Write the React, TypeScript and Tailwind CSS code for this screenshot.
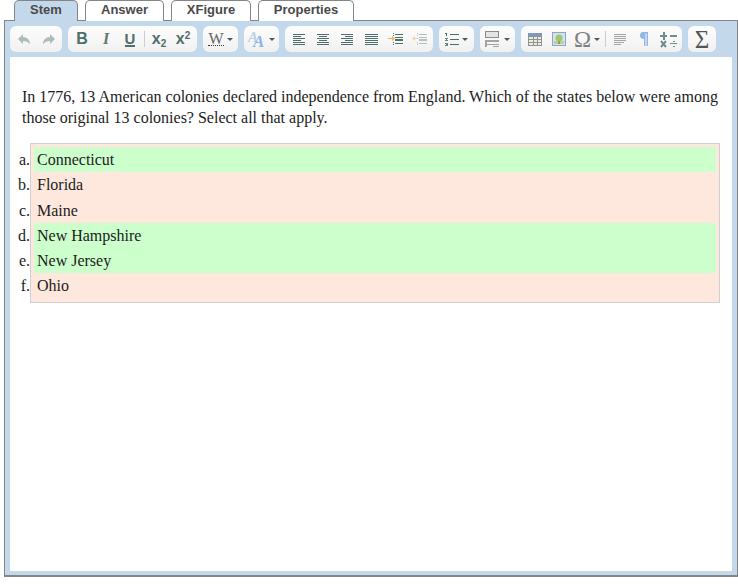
import React from "react";

const Caret = () => (
  <span className="w-0 h-0 border-x-[3px] border-x-transparent border-t-[3px] border-t-[#555]" />
);

const Btn = ({ w = "w-6", children }: { w?: string; children: React.ReactNode }) => (
  <div className={`${w} h-[26px] flex items-center justify-center gap-[3px] shrink-0`}>{children}</div>
);

const Group = ({ children }: { children: React.ReactNode }) => (
  <div className="flex items-center h-[26px] px-[2px] rounded-[6px] bg-gradient-to-b from-[#fdfdfd] to-[#f1f1f1] shrink-0">
    {children}
  </div>
);

const Sep = () => <div className="w-px h-[16px] bg-[#c9cfd0] mx-[2px] shrink-0" />;

const Svg = ({ children, w = 16, h = 16 }: { children: React.ReactNode; w?: number; h?: number }) => (
  <svg width={w} height={h} viewBox={`0 0 ${w} ${h}`} className="block shrink-0" shapeRendering="crispEdges">
    {children}
  </svg>
);

const Lines = ({ rows, color = "#4f6e6c" }: { rows: [number, number, number][]; color?: string }) => (
  <Svg w={13} h={12}>
    {rows.map(([x, y, w], i) => (
      <rect key={i} x={x} y={y} width={w} height={1} fill={color} />
    ))}
  </Svg>
);

const Tab = ({ label, active, w }: { label: string; active?: boolean; w: string }) => (
  <div
    className={`${w} h-[21px] -mb-px flex items-center justify-center rounded-t-[5px] border border-b-0 border-[#858585] text-[13px] font-bold text-[#4a4a4a] pb-[2px] ${
      active ? "bg-[#c4d8eb]" : "bg-white"
    }`}
    style={active ? { zIndex: 1 } : undefined}
  >
    {label}
  </div>
);

const items = [
  { t: "Connecticut", ok: true },
  { t: "Florida", ok: false },
  { t: "Maine", ok: false },
  { t: "New Hampshire", ok: true },
  { t: "New Jersey", ok: true },
  { t: "Ohio", ok: false },
];

const sans = "font-['Liberation_Sans',Arial,sans-serif]";
const serif = "font-['Liberation_Serif','Times_New_Roman',serif]";

export default function App() {
  return (
    <div className={`w-[738px] h-[584px] bg-white overflow-hidden ${sans}`}>
      <div className="flex gap-[7px] pl-[14px] h-5 relative">
        <Tab label="Stem" active w="w-[64px]" />
        <Tab label="Answer" w="w-[79px]" />
        <Tab label="XFigure" w="w-[80px]" />
        <Tab label="Properties" w="w-[96px]" />
      </div>
      <div className="ml-1 w-[734px] h-[557px] border border-[#858585] border-b-2 bg-[#c4d8eb] flex flex-col">
        <div className="flex items-center gap-[6px] pl-[5px] pt-[5px] h-[36px] shrink-0 pb-[5px]">
          <Group>
            <Btn>
              <Svg w={15} h={12}>
                <path d="M6 1 L1 6 L6 11 V8 C9 8 11 9 13 11 C13 7 10 4 6 4 Z" fill="#aebcb9" shapeRendering="auto" />
              </Svg>
            </Btn>
            <Btn>
              <Svg w={15} h={12}>
                <path d="M9 1 L14 6 L9 11 V8 C6 8 4 9 2 11 C2 7 5 4 9 4 Z" fill="#aebcb9" shapeRendering="auto" />
              </Svg>
            </Btn>
          </Group>
          <Group>
            <Btn><span className="text-[16px] leading-none font-black text-[#4f6e6c]">B</span></Btn>
            <Btn><span className={`${serif} text-[16px] leading-none font-bold italic text-[#5f7775]`}>I</span></Btn>
            <Btn>
              <span className="text-[15px] leading-[13px] font-bold text-[#4f6e6c] border-b-2 border-[#4f6e6c]">U</span>
            </Btn>
            <Sep />
            <Btn>
              <span className="text-[16px] leading-none font-bold text-[#4f6e6c]">
                x<span className="text-[10px] relative top-[3px]">2</span>
              </span>
            </Btn>
            <Btn>
              <span className="text-[16px] leading-none font-bold text-[#4f6e6c]">
                x<span className="text-[10px] relative -top-[5px]">2</span>
              </span>
            </Btn>
          </Group>
          <Group>
            <Btn w="w-[31px]">
              <span className={`${serif} text-[16px] leading-[13px] text-[#666] border-b border-dotted border-[#333]`}>W</span>
              <Caret />
            </Btn>
          </Group>
          <Group>
            <Btn w="w-[31px]">
              <span className={`${serif} relative w-[18px] h-[18px] block italic font-bold text-[#8fb4ea] shrink-0`}>
                <span className="absolute left-0 top-0 text-[15px] leading-none text-[#bcd0e8]">A</span>
                <span className="absolute left-[5px] top-[3px] text-[17px] leading-none">A</span>
              </span>
              <Caret />
            </Btn>
          </Group>
          <Group>
            <Btn><Lines rows={[[0,1,12],[0,3,8],[0,5,12],[0,7,8],[0,9,12],[0,11,12]]} /></Btn>
            <Btn><Lines rows={[[0,1,12],[2,3,8],[0,5,12],[2,7,8],[0,9,12],[0,11,12]]} /></Btn>
            <Btn><Lines rows={[[0,1,12],[4,3,8],[0,5,12],[4,7,8],[0,9,12],[0,11,12]]} /></Btn>
            <Btn><Lines rows={[[0,1,13],[0,3,13],[0,5,13],[0,7,13],[0,9,13],[0,11,13]]} /></Btn>
            <Btn>
              <Svg w={15} h={12}>
                <rect x={5} y={0} width={1} height={1} fill="#4f6e6c" />
                <rect x={5} y={2} width={1} height={1} fill="#4f6e6c" />
                <rect x={5} y={9} width={1} height={1} fill="#4f6e6c" />
                <rect x={5} y={11} width={1} height={1} fill="#4f6e6c" />
                <rect x={7} y={1} width={8} height={1} fill="#4f6e6c" />
                <rect x={7} y={4} width={8} height={1} fill="#4f6e6c" />
                <rect x={7} y={6} width={8} height={2} fill="#4f6e6c" />
                <rect x={7} y={10} width={8} height={1} fill="#4f6e6c" />
                <path d="M0 5 H4 V3 L7 5.5 L4 8 V6 H0 Z" fill="#f2b05c" shapeRendering="auto" />
              </Svg>
            </Btn>
            <Btn>
              <Svg w={15} h={12}>
                <rect x={5} y={0} width={1} height={1} fill="#b4c2bf" />
                <rect x={5} y={2} width={1} height={1} fill="#b4c2bf" />
                <rect x={5} y={9} width={1} height={1} fill="#b4c2bf" />
                <rect x={5} y={11} width={1} height={1} fill="#b4c2bf" />
                <rect x={7} y={1} width={8} height={1} fill="#b4c2bf" />
                <rect x={7} y={4} width={8} height={1} fill="#b4c2bf" />
                <rect x={7} y={6} width={8} height={2} fill="#b4c2bf" />
                <rect x={7} y={10} width={8} height={1} fill="#b4c2bf" />
                <path d="M7 5 H3 V3 L0 5.5 L3 8 V6 H7 Z" fill="#f6d3a4" shapeRendering="auto" />
              </Svg>
            </Btn>
          </Group>
          <Group>
            <Btn w="w-[31px]">
              <Svg w={14} h={14}>
                <path d="M0 1 H2 V4 H1 V2 H0 Z" fill="#4f6e6c" />
                <path d="M0 6 H3 V7 H1 V8 H3 V9 H0 V8 H2 V7 H0 Z" fill="#4f6e6c" opacity={0.85} />
                <path d="M0 11 H3 V14 H0 V13 H2 V12.5 H1 V12 H2 V12 H0 Z" fill="#4f6e6c" opacity={0.85} />
                <rect x={5} y={2} width={9} height={1} fill="#4f6e6c" />
                <rect x={5} y={7} width={9} height={1} fill="#4f6e6c" />
                <rect x={5} y={12} width={9} height={1} fill="#4f6e6c" />
              </Svg>
              <Caret />
            </Btn>
          </Group>
          <Group>
            <Btn w="w-[31px]">
              <Svg w={16} h={17}>
                <rect x={0.5} y={0.5} width={13} height={6} fill="#e4e4e4" stroke="#8c8c8c" />
                <rect x={0} y={9} width={14} height={2} fill="#a3a3a3" />
                <rect x={0} y={9} width={2} height={7} fill="#a3a3a3" />
                <rect x={2} y={13} width={12} height={1} fill="#a3a3a3" />
                <rect x={8} y={15} width={6} height={1} fill="#a3a3a3" />
              </Svg>
              <Caret />
            </Btn>
          </Group>
          <Group>
            <Btn>
              <Svg w={14} h={13}>
                <rect x={0} y={0} width={14} height={3} fill="#7f97c4" />
                <rect x={0.5} y={3.5} width={13} height={9} fill="#f0ead8" stroke="#8a9494" />
                <rect x={5} y={3} width={1} height={10} fill="#8a9494" />
                <rect x={9} y={3} width={1} height={10} fill="#8a9494" />
                <rect x={0} y={6} width={14} height={1} fill="#8a9494" />
                <rect x={0} y={9} width={14} height={1} fill="#8a9494" />
              </Svg>
            </Btn>
            <Btn>
              <Svg w={14} h={14}>
                <rect x={0.5} y={0.5} width={13} height={13} fill="#d3e2f3" stroke="#8fa6c8" />
                <rect x={2} y={9} width={10} height={3} fill="#b9d39a" />
                <rect x={6} y={8} width={2} height={4} fill="#b08a5a" />
                <circle cx={7} cy={6} r={3.5} fill="#9cc96a" shapeRendering="auto" />
              </Svg>
            </Btn>
            <Btn w="w-8">
              <span className={`${serif} text-[23px] leading-none text-[#808080]`}>Ω</span>
              <Caret />
            </Btn>
            <Sep />
            <Btn>
              <Lines color="#a3a3a3" rows={[[0,1,12],[0,3,12],[0,5,12],[0,7,12],[0,9,10],[0,11,7]]} />
            </Btn>
            <Btn>
              <Svg w={9} h={14}>
                <path d="M3 0 H8 V14 H6.5 V1.5 H5.5 V14 H4 V7 C1 7 0 5.5 0 3.5 C0 1.5 1 0 3 0 Z" fill="#8fb8e6" shapeRendering="auto" />
              </Svg>
            </Btn>
            <Btn>
              <Svg w={17} h={17}>
                <path d="M0 4 H7 V6 H0 Z M2.5 1 H4.5 V9 H2.5 Z" fill="#6f8f8c" />
                <rect x={10} y={4} width={7} height={2} fill="#6f8f8c" />
                <path d="M1 10 L6 16 M6 10 L1 16" stroke="#6f8f8c" strokeWidth={2} fill="none" shapeRendering="auto" />
                <rect x={10} y={12} width={7} height={1} fill="#6f8f8c" />
                <rect x={13} y={10} width={2} height={1} fill="#6f8f8c" />
                <rect x={13} y={15} width={2} height={1} fill="#6f8f8c" />
              </Svg>
            </Btn>
          </Group>
          <div className="flex items-center justify-center w-7 h-[26px] rounded-[6px] bg-gradient-to-b from-[#fdfdfd] to-[#f1f1f1] shrink-0">
            <span className={`${serif} text-[25px] leading-none text-[#555]`}>Σ</span>
          </div>
        </div>
        <div className={`mx-[5px] mb-1 flex-1 bg-white ${serif} text-[16px] leading-[21px] text-[#1c1c1c]`}>
          <p className="pt-[29px] pl-3 pr-2">
            In 1776, 13 American colonies declared independence from England. Which of the states below were among those original 13 colonies? Select all that apply.
          </p>
          <ol className="mt-[15px] ml-5 mr-3 border border-[#d0d0d0] bg-[#fee8dd] p-[3px] list-[lower-alpha] h-[160px]">
            {items.map((it) => (
              <li
                key={it.t}
                className={`h-[25.3px] leading-[25px] pl-[3px] ${it.ok ? "bg-[#ccffcc]" : ""}`}
              >
                {it.t}
              </li>
            ))}
          </ol>
        </div>
      </div>
    </div>
  );
}
